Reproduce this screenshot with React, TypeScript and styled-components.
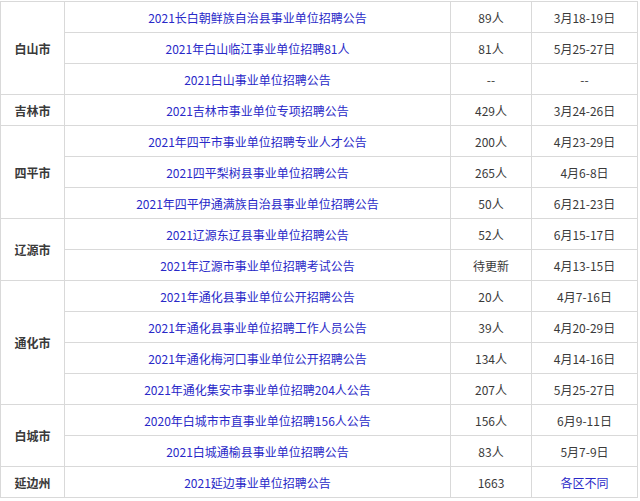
import React from "react";
import styled, { createGlobalStyle } from "styled-components";

const Global = createGlobalStyle`
  body { margin: 0; background: #fff; font-family: "Noto Sans CJK SC", "Liberation Sans", sans-serif; }
`;

const Table = styled.table`
  border-collapse: collapse;
  width: 638px;
  margin-top: 1px;
  table-layout: fixed;
`;

const Td = styled.td<{ $w?: number; $city?: boolean; $link?: boolean }>`
  border: 1px solid #d9d9d9;
  height: 30px;
  padding: 0;
  text-align: center;
  font-size: 12px;
  color: ${(p) => (p.$link ? "#2929c8" : "#3a3a3a")};
  font-weight: ${(p) => (p.$city ? 700 : 400)};
  ${(p) => (p.$w ? `width: ${p.$w}px;` : "")}
`;

type Row = [string, string, string, boolean?];
const groups: { city: string; rows: Row[] }[] = [
  { city: "白山市", rows: [
    ["2021长白朝鲜族自治县事业单位招聘公告", "89人", "3月18-19日"],
    ["2021年白山临江事业单位招聘81人", "81人", "5月25-27日"],
    ["2021白山事业单位招聘公告", "--", "--"],
  ]},
  { city: "吉林市", rows: [["2021吉林市事业单位专项招聘公告", "429人", "3月24-26日"]] },
  { city: "四平市", rows: [
    ["2021年四平市事业单位招聘专业人才公告", "200人", "4月23-29日"],
    ["2021四平梨树县事业单位招聘公告", "265人", "4月6-8日"],
    ["2021年四平伊通满族自治县事业单位招聘公告", "50人", "6月21-23日"],
  ]},
  { city: "辽源市", rows: [
    ["2021辽源东辽县事业单位招聘公告", "52人", "6月15-17日"],
    ["2021年辽源市事业单位招聘考试公告", "待更新", "4月13-15日"],
  ]},
  { city: "通化市", rows: [
    ["2021年通化县事业单位公开招聘公告", "20人", "4月7-16日"],
    ["2021年通化县事业单位招聘工作人员公告", "39人", "4月20-29日"],
    ["2021年通化梅河口事业单位公开招聘公告", "134人", "4月14-16日"],
    ["2021年通化集安市事业单位招聘204人公告", "207人", "5月25-27日"],
  ]},
  { city: "白城市", rows: [
    ["2020年白城市市直事业单位招聘156人公告", "156人", "6月9-11日"],
    ["2021白城通榆县事业单位招聘公告", "83人", "5月7-9日"],
  ]},
  { city: "延边州", rows: [["2021延边事业单位招聘公告", "1663", "各区不同", true]] },
];

export default function App() {
  return (
    <>
      <Global />
      <Table>
        <tbody>
          {groups.map((g) =>
            g.rows.map((r, i) => (
              <tr key={g.city + i}>
                {i === 0 && (
                  <Td $w={63} $city rowSpan={g.rows.length}>{g.city}</Td>
                )}
                <Td $link $w={385}>{r[0]}</Td>
                <Td $w={80}>{r[1]}</Td>
                <Td $link={r[3]}>{r[2]}</Td>
              </tr>
            ))
          )}
        </tbody>
      </Table>
    </>
  );
}
